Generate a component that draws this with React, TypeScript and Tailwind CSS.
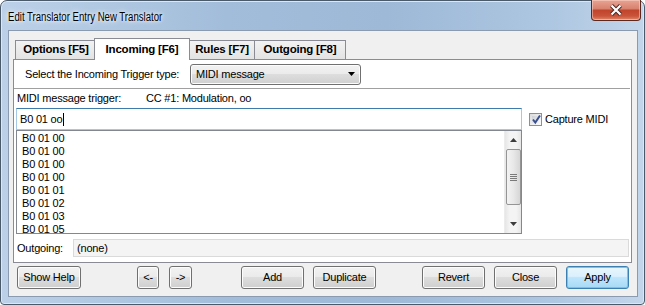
import React from "react";

const btn =
  "h-[23px] w-[63px] rounded-[3px] border border-[#707070] bg-[linear-gradient(#f2f2f2_0%,#ebebeb_45%,#dddddd_50%,#cfcfcf_100%)] shadow-[inset_0_0_0_1px_#fcfcfc] flex items-center justify-center text-black";

function Btn({ label, className = "" }: { label: string; className?: string }) {
  return <div className={`${btn} ${className}`}>{label}</div>;
}

function Tab({
  label,
  selected,
  className,
}: {
  label: string;
  selected?: boolean;
  className: string;
}) {
  return (
    <div
      className={
        selected
          ? `relative z-10 h-[22px] -mb-px border border-b-0 border-[#898c95] bg-white flex items-start justify-center pt-[2px] font-bold text-[11.5px] ${className}`
          : `h-[19px] border border-b-0 border-[#898c95] bg-[linear-gradient(#f2f2f2,#e3e3e3)] flex items-center justify-center font-bold text-[11.5px] ${className}`
      }
    >
      {label}
    </div>
  );
}

export default function App() {
  const items = [
    "B0 01 00",
    "B0 01 00",
    "B0 01 00",
    "B0 01 00",
    "B0 01 01",
    "B0 01 02",
    "B0 01 03",
    "B0 01 05",
  ];
  return (
    <div className="w-[645px] h-[305px] bg-white font-['Liberation_Sans',Arial,sans-serif] text-[11px] tracking-[-0.2px] text-black">
      <div className="w-[645px] h-[305px] rounded-t-[7px] rounded-b-[4px] border border-[#4b5a6b] bg-[linear-gradient(90deg,#bcd1e8_0%,#a2bdda_35%,#9db9d7_60%,#adc6e1_85%,#c2d5ea_100%)] shadow-[inset_0_0_0_1px_#dbe7f4] flex flex-col">
        {/* title bar */}
        <div className="h-[29px] flex items-start relative">
          <div className="ml-[7px] mt-[7px] text-[12px] tracking-normal text-black whitespace-nowrap origin-left scale-x-[0.8] [text-shadow:0_0_8px_#ffffff,0_0_4px_#ffffff]">
            Edit Translator Entry New Translator
          </div>
          <div className="absolute right-[3px] -top-px w-[50px] h-[21px] rounded-b-[4px] border border-[#5a2a22] border-t-0 bg-[linear-gradient(#e8a493_0%,#d7816d_45%,#c1432b_50%,#c8543a_80%,#e0896c_100%)] shadow-[inset_0_0_0_1px_rgba(255,220,210,0.5)] flex items-center justify-center">
            <svg width="14" height="12" viewBox="0 0 14 12">
              <path
                d="M2.5 1.5 L11.5 10.5 M11.5 1.5 L2.5 10.5"
                stroke="#4a2a24"
                strokeWidth="4.2"
                fill="none"
              />
              <path
                d="M2.5 1.5 L11.5 10.5 M11.5 1.5 L2.5 10.5"
                stroke="#ffffff"
                strokeWidth="2.2"
                fill="none"
              />
            </svg>
          </div>
        </div>
        {/* client */}
        <div className="ml-[7px] w-[630px] h-[267px] border border-[#8a9bb0] bg-[#f0f0f0] flex flex-col">
          {/* tabs */}
          <div className="mt-[7px] h-[21px] flex items-end">
            <Tab label="Options [F5]" className="ml-[6px] w-[82px]" />
            <Tab label="Incoming [F6]" selected className="-ml-[3px] w-[96px]" />
            <Tab label="Rules [F7]" className="-ml-px w-[66px]" />
            <Tab label="Outgoing [F8]" className="-ml-px w-[92px]" />
          </div>
          {/* panel */}
          <div className="ml-[4px] w-[619px] h-[204px] border border-[#898c95] bg-white flex flex-col">
            <div className="h-[29px] mr-px border-b border-[#a0a0a0] flex items-center">
              <div className="ml-[11px] w-[165px]">Select the Incoming Trigger type:</div>
              <div className="w-[171px] h-[21px] rounded-[3px] border border-[#707070] bg-[linear-gradient(#f2f2f2_0%,#ebebeb_45%,#dddddd_50%,#cfcfcf_100%)] shadow-[inset_0_0_0_1px_#fcfcfc] flex items-center pl-[5px]">
                <span className="flex-1">MIDI message</span>
                <svg width="7" height="4" viewBox="0 0 7 4" className="mr-[5px]">
                  <path d="M0 0 H7 L3.5 4 Z" fill="#000" />
                </svg>
              </div>
            </div>
            <div className="h-[19px] flex items-center">
              <span className="ml-[3px] w-[129px]">MIDI message trigger:</span>
              <span>CC #1: Modulation, oo</span>
            </div>
            <div className="flex items-start">
              <div className="flex flex-col ml-[2px]">
                <div className="w-[506px] h-[22px] border border-[#a5c8e6] border-t-[#3d7bad] flex items-center pl-[3px]">
                  B0 01 oo<span className="ml-px w-px h-[13px] bg-black" />
                </div>
                <div className="w-[506px] h-[104px] border border-[#828790] flex overflow-hidden">
                  <div className="flex-1 pl-[5px] pt-[1px] leading-[13px] overflow-hidden">
                    {items.map((t, i) => (
                      <div key={i} className="h-[13px]">
                        {t}
                      </div>
                    ))}
                  </div>
                  <div className="w-[17px] h-full bg-[linear-gradient(90deg,#e6e6e6,#f4f4f4_30%,#f4f4f4_70%,#e6e6e6)] border-l border-[#ececec] flex flex-col items-center">
                    <div className="h-[18px] flex items-center justify-center">
                      <svg width="7" height="4" viewBox="0 0 7 4">
                        <path d="M0 4 H7 L3.5 0 Z" fill="#3c3c3c" />
                      </svg>
                    </div>
                    <div className="w-[15px] h-[56px] rounded-[2px] border border-[#959595] bg-[linear-gradient(90deg,#f3f3f3,#e8e8e8_50%,#d6d6d6)] flex flex-col items-center justify-center gap-[1px]">
                      <div className="w-[7px] h-px bg-[#7a7a7a]" />
                      <div className="w-[7px] h-px bg-[#7a7a7a]" />
                      <div className="w-[7px] h-px bg-[#7a7a7a]" />
                      <div className="w-[7px] h-px bg-[#7a7a7a]" />
                    </div>
                    <div className="flex-1" />
                    <div className="h-[18px] flex items-center justify-center">
                      <svg width="7" height="4" viewBox="0 0 7 4">
                        <path d="M0 0 H7 L3.5 4 Z" fill="#3c3c3c" />
                      </svg>
                    </div>
                  </div>
                </div>
              </div>
              <div className="ml-[7px] mt-[3px] flex items-center">
                <div className="w-[13px] h-[13px] border border-[#8f8f8f] bg-[linear-gradient(135deg,#dcdcdc,#fdfdfd)] p-[2px]">
                  <div className="w-full h-full bg-[linear-gradient(135deg,#cbcfd5,#f6f6f6)] relative">
                    <svg width="11" height="11" viewBox="0 0 11 11" className="absolute -left-[1px] -top-[2px]">
                      <path d="M2 5.5 L4.3 8.5 L9 1.5" stroke="#3a4f8e" strokeWidth="2" fill="none" />
                    </svg>
                  </div>
                </div>
                <span className="ml-[3px]">Capture MIDI</span>
              </div>
            </div>
            <div className="mt-[5px] h-[18px] flex items-center">
              <span className="ml-[3px] w-[56px]">Outgoing:</span>
              <div className="w-[556px] h-[18px] border border-[#dadada] bg-[#f4f4f4] flex items-center pl-[3px]">
                (none)
              </div>
            </div>
          </div>
          {/* buttons */}
          <div className="mt-[3px] flex items-center">
            <Btn label="Show Help" className="ml-[8px] w-[64px]" />
            <Btn label="<-" className="ml-[56px] !w-[22px]" />
            <Btn label="->" className="ml-[10px] !w-[23px]" />
            <Btn label="Add" className="ml-[49px]" />
            <Btn label="Duplicate" className="ml-[9px]" />
            <Btn label="Revert" className="ml-[46px]" />
            <Btn label="Close" className="ml-[9px]" />
            <div className="ml-[9px] h-[23px] w-[63px] rounded-[3px] border border-[#3c7fb1] bg-[linear-gradient(#eaf6fd_0%,#d9f0fc_45%,#bee6fd_50%,#a7d9f5_100%)] shadow-[inset_0_0_0_1px_#48d8fb] flex items-center justify-center">
              Apply
            </div>
          </div>
        </div>
      </div>
    </div>
  );
}
